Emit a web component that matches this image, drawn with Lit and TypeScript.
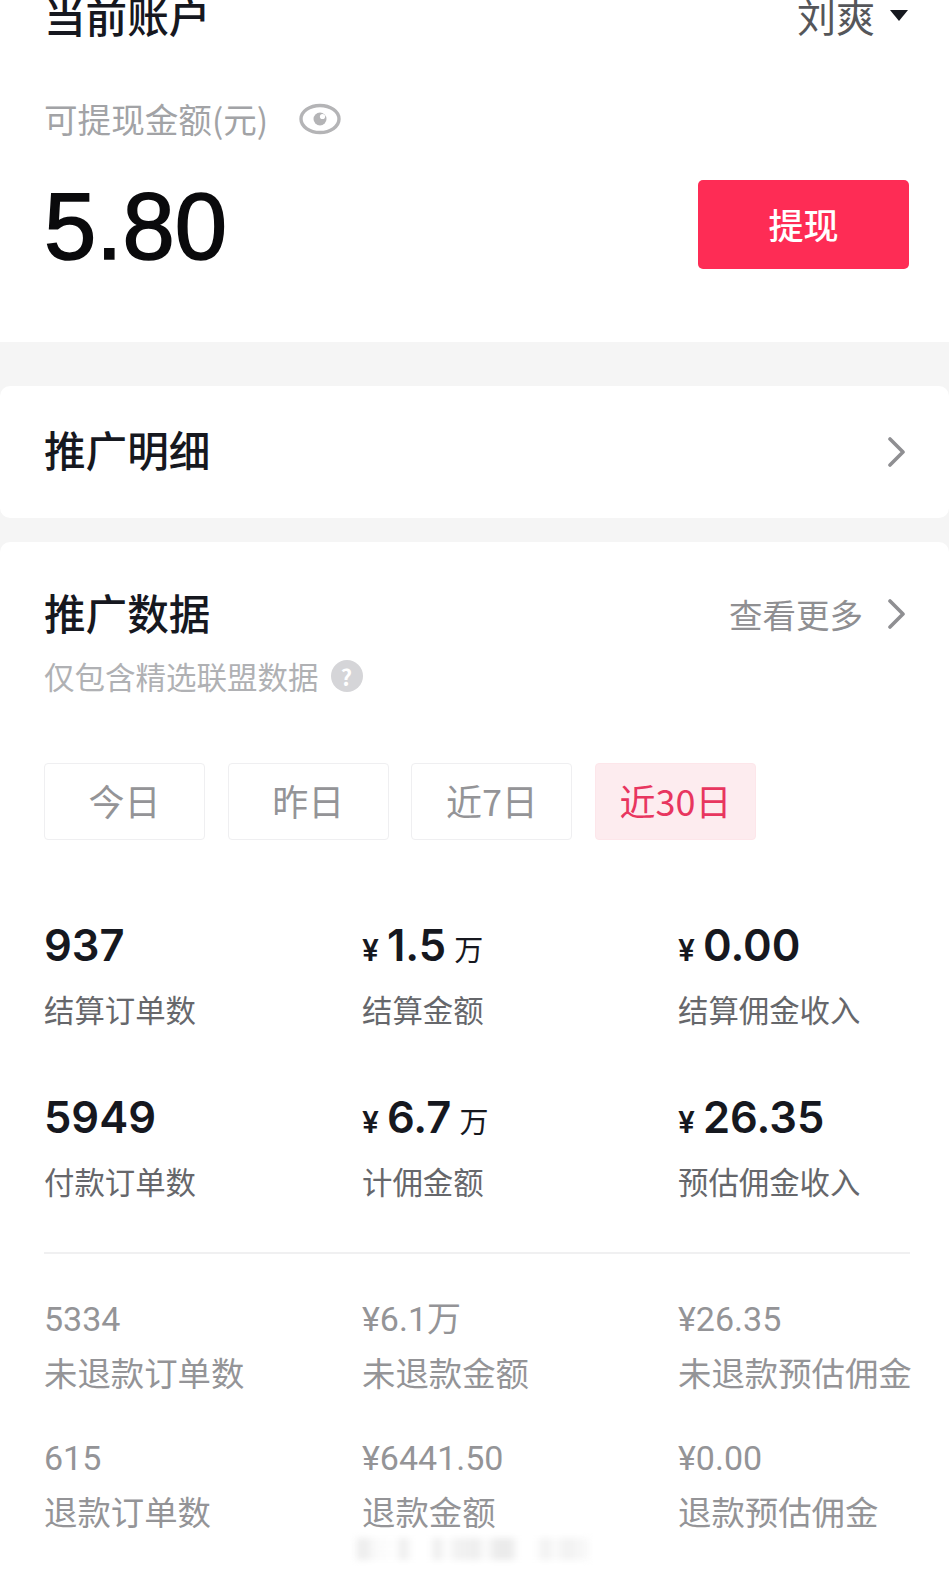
import { LitElement, html, css } from "lit";
import { customElement } from "lit/decorators.js";

const chevron = html`<svg class="chev" viewBox="0 0 18 32" width="18" height="32" fill="none">
  <path d="M3 3 L16 16 L3 29" stroke="#8f8f92" stroke-width="3.6" stroke-linecap="round" stroke-linejoin="round"/>
</svg>`;

const primary = [
  { cur: "", v: "937", unit: "", l: "结算订单数" },
  { cur: "¥", v: "1.5", unit: "万", l: "结算金额" },
  { cur: "¥", v: "0.00", unit: "", l: "结算佣金收入" },
  { cur: "", v: "5949", unit: "", l: "付款订单数" },
  { cur: "¥", v: "6.7", unit: "万", l: "计佣金额" },
  { cur: "¥", v: "26.35", unit: "", l: "预估佣金收入" },
];
const secondary = [
  { v: "5334", l: "未退款订单数" },
  { v: "¥6.1万", l: "未退款金额" },
  { v: "¥26.35", l: "未退款预估佣金" },
  { v: "615", l: "退款订单数" },
  { v: "¥6441.50", l: "退款金额" },
  { v: "¥0.00", l: "退款预估佣金" },
];
const tabs = ["今日", "昨日", "近7日", "近30日"];

@customElement("app-root")
export class AppRoot extends LitElement {
  static styles = css`
    :host {
      display: block;
      position: relative;
      width: 949px;
      height: 1570px;
      overflow: hidden;
      background: #f5f5f5;
      font-family: "Noto Sans CJK SC", "Liberation Sans", sans-serif;
      color: #16181f;
    }
    .account {
      height: 342px;
      background: #fff;
      padding: 0 40px 0 44px;
      box-sizing: border-box;
      display: flex;
      flex-direction: column;
    }
    .head {
      height: 42px;
      margin-top: -6px;
      display: flex;
      justify-content: space-between;
      align-items: center;
    }
    .title {
      font-size: 41.6px;
      line-height: 48px;
      font-weight: 500;
    }
    .user {
      display: flex;
      align-items: center;
      gap: 15px;
      font-size: 39px;
      line-height: 48px;
      color: #55565a;
    }
    .caret {
      width: 0;
      height: 0;
      border-left: 9px solid transparent;
      border-right: 9px solid transparent;
      border-top: 11px solid #16181f;
      margin-right: 1px;
    }
    .avail {
      margin-top: 60px;
      display: flex;
      align-items: center;
      gap: 31px;
      font-size: 33.6px;
      line-height: 46px;
      color: #a2a3a6;
    }
    .balance-row {
      margin-top: 38px;
      display: flex;
      justify-content: space-between;
      align-items: center;
    }
    .balance {
      font-family: "Liberation Sans", Roboto, sans-serif;
      font-size: 94px;
      line-height: 89px;
      margin-top: 2px;
      margin-bottom: -2px;
      -webkit-text-stroke: 1.6px #0a0a0c;
      color: #0a0a0c;
    }
    .withdraw {
      width: 211px;
      height: 89px;
      box-sizing: border-box;
      padding-bottom: 3px;
      border-radius: 5px;
      background: #fe2c55;
      color: #fff;
      font-size: 35px;
      font-weight: 500;
      display: flex;
      align-items: center;
      justify-content: center;
    }
    .card {
      background: #fff;
      border-radius: 10px;
    }
    .detail {
      margin-top: 44px;
      height: 132px;
      padding: 0 44px;
      display: flex;
      align-items: center;
      justify-content: space-between;
    }
    .detail .h2 {
      margin-top: -6px;
    }
    .h2 {
      font-size: 41.6px;
      line-height: 50px;
      font-weight: 500;
    }
    .data {
      margin-top: 24px;
      height: 1100px;
      padding: 45px 39px 0 44px;
    }
    .data-head {
      height: 50px;
      display: flex;
      justify-content: space-between;
      align-items: flex-start;
      margin-right: 5px;
    }
    .more {
      display: flex;
      align-items: center;
      gap: 24px;
      margin-top: 2px;
      font-size: 33.5px;
      line-height: 50px;
      color: #8f8f92;
    }
    .sub {
      margin-top: 19px;
      display: flex;
      align-items: center;
      gap: 12px;
      font-size: 30.5px;
      line-height: 40px;
      color: #b0b1b4;
    }
    .help {
      width: 32px;
      height: 32px;
      border-radius: 50%;
      background: #d5d5d8;
      color: #fff;
      font-size: 22px;
      line-height: 32px;
      font-weight: 700;
      text-align: center;
    }
    .tabs {
      margin-top: 67px;
      display: flex;
      gap: 22.7px;
    }
    .tab {
      width: 161px;
      height: 77px;
      box-sizing: border-box;
      padding-bottom: 4px;
      border: 1.5px solid #efeff1;
      border-radius: 4px;
      display: flex;
      align-items: center;
      justify-content: center;
      font-size: 36px;
      color: #949497;
    }
    .tab.on {
      background: #fdecef;
      border-color: #fde6ea;
      color: #e8365f;
    }
    .grid {
      display: grid;
      grid-template-columns: 318px 316px 1fr;
      margin-right: 1px;
    }
    .primary {
      margin-top: 78px;
      grid-template-rows: 172px 162px;
    }
    .val {
      height: 54px;
      font-family: Inter, "Liberation Sans", "Noto Sans CJK SC", sans-serif;
      font-size: 43.5px;
      line-height: 54px;
      font-weight: 600;
      color: #16181f;
      display: flex;
      align-items: baseline;
      white-space: nowrap;
    }
    .cur {
      font-size: 30px;
      margin-right: 8px;
    }
    .unit {
      font-family: "Noto Sans CJK SC", sans-serif;
      font-size: 29px;
      font-weight: 400;
      margin-left: 8px;
    }
    .lab {
      margin-top: 15px;
      font-size: 30.4px;
      line-height: 44px;
      color: #66676b;
      white-space: nowrap;
    }
    .rule {
      height: 2px;
      background: #f0f0f1;
    }
    .secondary {
      margin-top: 41px;
      grid-auto-rows: 139px;
    }
    .val2 {
      font-family: Roboto, "Liberation Sans", "Noto Sans CJK SC", sans-serif;
      font-size: 34px;
      line-height: 48px;
      color: #949497;
      white-space: nowrap;
    }
    .lab2 {
      margin-top: 6px;
      font-size: 33.4px;
      line-height: 46px;
      color: #949497;
      white-space: nowrap;
    }
    .smudge {
      position: absolute;
      left: 355px;
      top: 1538px;
      width: 235px;
      height: 22px;
      background: linear-gradient(
        90deg,
        #f8f8f8 0,
        #ebebeb 8px,
        #fafafa 20px,
        #fff 40px,
        #ededed 48px,
        #fff 58px,
        #fff 74px,
        #ededed 82px,
        #fff 92px,
        #f3f3f3 100px,
        #eeeeee 122px,
        #fdfdfd 130px,
        #ebebeb 142px,
        #ebebeb 155px,
        #fff 164px,
        #fff 180px,
        #f1f1f1 190px,
        #fbfbfb 200px,
        #f1f1f1 212px,
        #fbfbfb 235px
      );
      filter: blur(3px);
    }
  `;

  render() {
    return html`
      <section class="account">
        <div class="head">
          <div class="title">当前账户</div>
          <div class="user">刘爽<span class="caret"></span></div>
        </div>
        <div class="avail">
          <span>可提现金额(元)</span>
          <svg width="42" height="32" viewBox="0 0 42 32" fill="none">
            <ellipse cx="21" cy="16" rx="19" ry="13.5" stroke="#b4b4b6" stroke-width="3.4"/>
            <circle cx="21" cy="16" r="6.5" fill="#b4b4b6"/>
            <circle cx="23.5" cy="13.5" r="2.6" fill="#fff"/>
          </svg>
        </div>
        <div class="balance-row">
          <div class="balance">5.80</div>
          <div class="withdraw">提现</div>
        </div>
      </section>
      <section class="card detail">
        <div class="h2">推广明细</div>
        ${chevron}
      </section>
      <section class="card data">
        <div class="data-head">
          <div class="h2">推广数据</div>
          <div class="more">查看更多 ${chevron}</div>
        </div>
        <div class="sub">仅包含精选联盟数据<span class="help">?</span></div>
        <div class="tabs">
          ${tabs.map((t, i) => html`<div class="tab ${i === 3 ? "on" : ""}">${t}</div>`)}
        </div>
        <div class="grid primary">
          ${primary.map(
            (s) => html`<div>
              <div class="val">
                ${s.cur ? html`<span class="cur">${s.cur}</span>` : ""}<span>${s.v}</span>${s.unit
                  ? html`<span class="unit">${s.unit}</span>`
                  : ""}
              </div>
              <div class="lab">${s.l}</div>
            </div>`
          )}
        </div>
        <div class="rule"></div>
        <div class="grid secondary">
          ${secondary.map(
            (s) => html`<div>
              <div class="val2">${s.v}</div>
              <div class="lab2">${s.l}</div>
            </div>`
          )}
        </div>
      </section>
      <div class="smudge"></div>
    `;
  }
}
